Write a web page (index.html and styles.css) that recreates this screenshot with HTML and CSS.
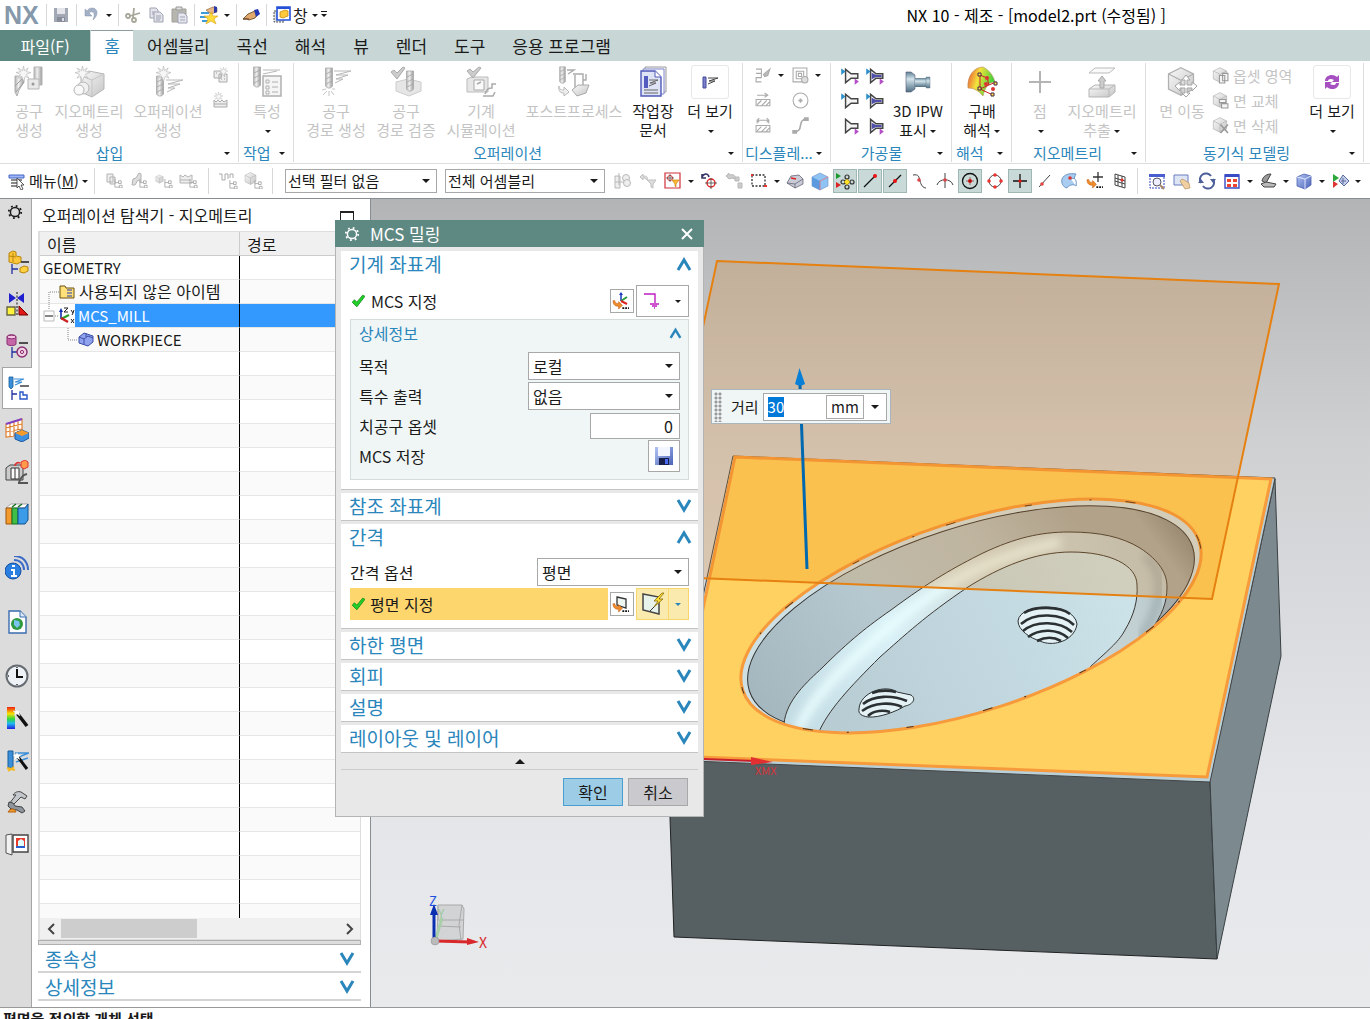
FILE: index.html
```html
<!DOCTYPE html>
<html lang="ko">
<head>
<meta charset="utf-8">
<title>NX 10 - 제조</title>
<link rel="stylesheet" href="styles.css">
</head>
<body>
<svg class="defs" width="0" height="0" aria-hidden="true">
  <defs>
    <linearGradient id="steel"><stop offset="0" stop-color="#b0b0b0"/><stop offset=".4" stop-color="#f0f0f0"/><stop offset="1" stop-color="#9c9c9c"/></linearGradient>
    <linearGradient id="boxg" x2="1" y2="1"><stop offset="0" stop-color="#fafafa"/><stop offset="1" stop-color="#c4c4c4"/></linearGradient>
    <linearGradient id="blueg" x2="1" y2="1"><stop offset="0" stop-color="#b4c6f4"/><stop offset="1" stop-color="#4a62b8"/></linearGradient>
    <linearGradient id="pipe" x2="0" y2="1"><stop offset="0" stop-color="#5d7f92"/><stop offset=".35" stop-color="#d3e4ec"/><stop offset="1" stop-color="#4e6f82"/></linearGradient>
    <linearGradient id="rainbow" x2="1" y2=".3"><stop offset="0" stop-color="#ee4a35"/><stop offset=".45" stop-color="#f3e23c"/><stop offset="1" stop-color="#3ad23a"/></linearGradient>
    <linearGradient id="spectrum" x2="0" y2="1"><stop offset="0" stop-color="#f02010"/><stop offset=".3" stop-color="#f8e000"/><stop offset=".55" stop-color="#30d840"/><stop offset=".75" stop-color="#20b8f0"/><stop offset="1" stop-color="#2020e0"/></linearGradient>
    <symbol id="spark" viewBox="0 0 16 16"><path d="M8 0l1 5 4-3-2 4 5 1-5 2 3 4-4-2-2 5-2-5-4 2 3-4-5-2 5-1-3-4 5 3z" fill="#f6f6f6" stroke="#bdbdbd" stroke-width=".8"/></symbol>
    <symbol id="mill" viewBox="0 0 8 22"><path d="M.5 1h7v18l-2 2h-3l-2-2z" fill="url(#steel)" stroke="#a8a8a8" stroke-width=".8"/><path d="M1 7l6-3M1 12l6-3M1 17l6-3" stroke="#a2a2a2" stroke-width=".8"/></symbol>
    <symbol id="path" viewBox="0 0 18 18"><path d="M0 4h17L2 8h12L2 12h7L1 16" fill="none" stroke="#b8b8b8"/></symbol>
    <symbol id="cube" viewBox="0 0 24 24"><path d="M12 1l10 5v12l-10 5-10-5V6z" fill="url(#boxg)" stroke="#b0b0b0"/><path d="M2 6l10 5 10-5M12 11v12" fill="none" stroke="#b0b0b0"/></symbol>
    <symbol id="gtree" viewBox="0 0 10 10"><path d="M1 0v9h5M1 4h4" fill="none" stroke="#a8a8a8"/><path d="M5 2h3v3H5zM6 7h3v3H6z" fill="#fff" stroke="#a8a8a8"/></symbol>
    <symbol id="tick" viewBox="0 0 12 12"><path d="M1 7l2-2 2 2 5-6 2 1-7 9z" fill="#20d028" stroke="#128a1a" stroke-width=".7"/></symbol>
    <symbol id="up" viewBox="0 0 16 14"><path d="M2 13L8 3l6 10" fill="none" stroke="#2a86bb" stroke-width="3"/></symbol>
    <symbol id="down" viewBox="0 0 16 14"><path d="M2 1l6 10 6-10" fill="none" stroke="#2a86bb" stroke-width="3"/></symbol>
    <symbol id="gear" viewBox="0 0 16 16"><circle cx="8" cy="8" r="4.600" fill="none" stroke="currentColor" stroke-width="1.500"/><circle cx="8" cy="8" r="6.200" fill="none" stroke="currentColor" stroke-width="1.800" stroke-dasharray="1.800 3.070"/></symbol>
    <symbol id="cone" viewBox="0 0 18 16"><path d="M5 2v12l5-4h6V6h-6z" fill="#f4f4f4" stroke="#444" stroke-width="1.3"/></symbol>
    <symbol id="conef" viewBox="0 0 18 16"><path d="M5 2v12l5-4h6V6h-6z" fill="#f4f4f4" stroke="#444" stroke-width="1.3"/><path d="M6 5l4 2h5v2h-5l-4 2z" fill="#5050a8"/></symbol>
    <symbol id="tri-b" viewBox="0 0 4 6"><path d="M0 0l4 3-4 3z" fill="#2c8fc9"/></symbol>
    <symbol id="tri-p" viewBox="0 0 4 6"><path d="M0 0l4 3-4 3z" fill="#b44fc8"/></symbol>
    <symbol id="hook" viewBox="0 0 18 16"><path d="M1 6c0 5 3 6 6 6v3l4-4-4-4v2c-3 0-4-1-4-3z" fill="#f08c28" stroke="#c05a10" stroke-width=".6"/><path d="M11 14h2M14 14h2M17 14h1" stroke="#111" stroke-width="2"/></symbol>
  </defs>
</svg>

<header class="titlebar">
  <div class="logo">NX</div>
  <i class="sep"></i>
  <button class="qa" aria-label="저장"><svg viewBox="0 0 22 22"><path d="M4 4h14v14H4z" fill="#a3a8b5"/><path d="M7 4h8v6H7z" fill="#e4e6ec"/><path d="M7 13h8v5H7z" fill="#888d9a"/><path d="M12 14h2v3h-2z" fill="#dde"/></svg></button>
  <i class="sep"></i>
  <button class="qa" aria-label="실행 취소"><svg viewBox="0 0 22 22"><path d="M5 5v7h7l-3-3c4-3 7 0 4 7 6-5 5-12-1-12-2 0-4 1-5 3z" fill="#a3b0c6" stroke="#8795ae" stroke-width=".5"/></svg></button>
  <button class="drop" aria-label="실행 취소 목록"><i class="caret"></i></button>
  <i class="sep"></i>
  <button class="qa" aria-label="잘라내기"><svg viewBox="0 0 22 22" fill="none" stroke="#a7a79a" stroke-width="1.8"><path d="M12 4l-1 10M18 9L8 12"/><circle cx="12" cy="16" r="2"/><circle cx="6" cy="12" r="2"/></svg></button>
  <button class="qa" aria-label="복사"><svg viewBox="0 0 22 22" fill="#e2e4ea" stroke="#9fa3b4"><path d="M5 4h6l2 2v8H5z"/><path d="M9 8h6l3 3v7H9z"/><path d="M11 12h5M11 14h5M11 16h4M7 8h2M7 10h2"/></svg></button>
  <button class="qa" aria-label="붙여넣기"><svg viewBox="0 0 22 22"><path d="M4 5h14v13H4z" fill="#b6b6ae" stroke="#a0a09a"/><path d="M8 3h6v3H8z" fill="#ddd" stroke="#999"/><path d="M10 9h6l3 3v7h-9z" fill="#e6e8ee" stroke="#9fa3b4"/><path d="M12 13h5M12 16h5" stroke="#9fa3b4"/></svg></button>
  <i class="sep"></i>
  <button class="qa" aria-label="명령 찾기"><svg viewBox="0 0 22 22"><path d="M3 9h8M2 13h7M4 17h8" stroke="#3f9ad8" stroke-width="2"/><path d="M8 6l7-3 4 1v4l-6 2z" fill="#e6b684" stroke="#8a5a30" stroke-width=".6"/><path d="M16 2l3 1v5l-3 1z" fill="#2c3aa8"/><path d="M13 8l2 4 5 0-4 3 2 5-5-3-5 3 2-5-4-3h5z" fill="#ffdb3c" stroke="#d8a010" stroke-width=".6"/></svg></button>
  <button class="drop" aria-label="명령 목록"><i class="caret"></i></button>
  <i class="sep"></i>
  <button class="qa" aria-label="터치 모드"><svg viewBox="0 0 22 22"><path d="M3 15l5-5 7-3 3 3-3 4-6 2-2-1z" fill="#e2a96c" stroke="#5c3a1c" stroke-width=".8"/><path d="M3 15h6" stroke="#5c3a1c"/><path d="M14 6l4-1 2 5-4 3z" fill="#2236b4"/></svg></button>
  <i class="sep"></i>
  <button class="qa-text"><svg viewBox="0 0 22 22" width="22" height="22"><path d="M4 7h10v11H4z" fill="#d8dee0" stroke="#555" stroke-dasharray="2 1"/><path d="M7 3h13v13H7z" fill="#fff" stroke="#2450d8" stroke-width="1.6"/><path d="M7 3h13v2H7z" fill="#2450d8"/><path d="M10 8l5-2 3 1v5l-5 2-3-1z" fill="#ffc93c" stroke="#c98a10" stroke-width=".8"/></svg>창<i class="caret"></i></button>
  <button class="drop" aria-label="도구모음 옵션"><i class="caret lined"></i></button>
  <h1>NX 10 - 제조 - [model2.prt (수정됨) ]</h1>
</header>

<nav class="tabs">
  <button class="file">파일(F)</button>
  <button class="on">홈</button>
  <button>어셈블리</button><button>곡선</button><button>해석</button><button>뷰</button><button>렌더</button><button>도구</button><button>응용 프로그램</button>
</nav>

<section class="ribbon">
  <div class="group g-insert">
    <div class="tools">
      <button class="big w52" disabled><svg viewBox="0 0 32 32"><path d="M21 1h8v18h-8z" fill="url(#steel)" stroke="#b5b5b5"/><path d="M15 13h11v10H15z" fill="#e9e9e9" stroke="#b5b5b5"/><circle cx="20" cy="18" r="1.500" fill="#999"/><path d="M2 10h9v6L6 24l-2 6-2-4z" fill="url(#steel)" stroke="#b0b0b0"/><path d="M2 20l8-8M3 26l8-10" stroke="#a0a0a0" fill="none"/><use href="#spark" x="3" y="0" width="15" height="15"/></svg><span>공구<br>생성</span></button>
      <button class="big w68" disabled><svg viewBox="0 0 32 32"><path d="M8 10l8-5 15 3v15l-12 8-11-5z" fill="url(#boxg)" stroke="#b5b5b5"/><path d="M8 10l11 4 12-6M19 14v17" fill="none" stroke="#c5c5c5"/><circle cx="10" cy="22" r="6" fill="#f0f0f0" stroke="#b5b5b5"/><circle cx="6" cy="24" r="5" fill="#fafafa" stroke="#b5b5b5"/><use href="#spark" x="2" y="0" width="15" height="15"/></svg><span>지오메트리<br>생성</span></button>
      <button class="big w90" disabled><svg viewBox="0 0 32 32"><use href="#mill" x="4" y="9" width="8" height="22"/><use href="#path" x="14" y="10" width="18" height="18"/><use href="#spark" x="4" y="0" width="15" height="15"/></svg><span>오퍼레이션<br>생성</span></button>
      <div class="stack">
        <button disabled aria-label="프로그램 생성"><svg viewBox="0 0 16 16"><path d="M1 4h7v7H1zM6 7h8v8H6z" fill="#eee" stroke="#aaa"/><path d="M8 9h1M11 9h1M8 12h1M11 12h1M3 6h1" stroke="#999"/><use href="#spark" x="6" y="0" width="9" height="9"/></svg></button>
        <button disabled aria-label="방법 생성"><svg viewBox="0 0 16 16"><path d="M1 15V8l2 2 2-2 2 2 2-2 2 2 3-2v7zM1 12h13" fill="#eee" stroke="#aaa"/><use href="#spark" x="1" y="0" width="9" height="9"/></svg></button>
      </div>
    </div>
    <div class="caption"><span>삽입</span><i class="caret"></i></div>
  </div>

  <div class="group g-action">
    <div class="tools">
      <button class="big w56" disabled><svg viewBox="0 0 32 32"><use href="#mill" x="2" y="0" width="8" height="22"/><path d="M12 4h17M12 8l14-3" stroke="#b8b8b8"/><path d="M12 10h18v20H12z" fill="#f5f5f5" stroke="#b0b0b0" stroke-width="1.5"/><path d="M15 14h3v3h-3zM15 20h3v3h-3zM15 25h3v3h-3zM21 16h6M21 21h6M21 26h6" fill="none" stroke="#b0b0b0"/></svg><span>특성<br><i class="caret"></i></span></button>
    </div>
    <div class="caption"><span>작업</span><i class="caret"></i></div>
  </div>

  <div class="group g-oper">
    <div class="tools">
      <button class="big w70" disabled><svg viewBox="0 0 32 32"><use href="#mill" x="5" y="1" width="8" height="22"/><use href="#path" x="14" y="1" width="18" height="18"/><path d="M2 24l4-1M15 23l-3 0M3 29l4-4M9 30v-5M14 29l-3-4" stroke="#c5c5c5"/></svg><span>공구<br>경로 생성</span></button>
      <button class="big w70" disabled><svg viewBox="0 0 32 32"><path d="M6 16l12-3 13 3v9l-12 5-13-5z" fill="#e6e6e6" stroke="#ccc"/><use href="#mill" x="16" y="4" width="8" height="22"/><path d="M1 6l3-2 3 3 6-6 2 1-8 11z" fill="#ccc" stroke="#aaa"/></svg><span>공구<br>경로 검증</span></button>
      <button class="big w80" disabled><svg viewBox="0 0 32 32"><path d="M2 13l5-2h16v15H2z" fill="#e6e6e6" stroke="#bbb"/><path d="M9 14h10v10H9z" fill="#fafafa" stroke="#aaa"/><path d="M12 18l4-2M20 28c2-5 3-6 7-6v-4h4M18 30h10l2-4" fill="none" stroke="#aaa" stroke-width="1.500"/><path d="M2 5l3-2 3 3 6-5 2 1-8 10z" fill="#ccc" stroke="#aaa"/></svg><span>기계<br>시뮬레이션</span></button>
      <button class="big w106" disabled><svg viewBox="0 0 32 32"><use href="#mill" x="1" y="0" width="7" height="18"/><path d="M9 4h7l-6 4M15 8h10v6h3V8M17 9v14M25 14v6" fill="none" stroke="#aaa" stroke-width="1.400"/><path d="M14 24l6-5h11l-3 8-9 3z" fill="url(#boxg)" stroke="#aaa"/><path d="M1 20c0 4 3 4 5 4v-3l5 5-5 4v-3c-3 0-6-1-5-7z" fill="#eee" stroke="#bbb"/></svg><span>포스트프로세스</span></button>
      <button class="big w52"><svg viewBox="0 0 32 32"><path d="M8 1h21v25H8z" fill="#f4f4fa" stroke="#9a9a9a"/><path d="M6 3h21v25H6z" fill="#fff" stroke="#7f86cc"/><path d="M4 5h14l6 6v19H4z" fill="#dfe3f6" stroke="#4f58b8" stroke-width="1.4"/><path d="M18 5v6h6" fill="#fff" stroke="#4f58b8"/><path d="M7 10h4v12H7z" fill="#555cc0"/><path d="M12 14h9l-8 3h6l-7 3M7 24h14M7 27h14" fill="none" stroke="#666"/></svg><span>작업장<br>문서</span></button>
      <button class="big w62 more"><svg viewBox="0 0 32 32"><path d="M9 11h3v11H9z" fill="#7a80cc" stroke="#444a98"/><path d="M14 12h10l-9 3h6l-7 3" fill="none" stroke="#444"/></svg><span>더 보기<br><i class="caret"></i></span></button>
    </div>
    <div class="caption"><span>오퍼레이션</span><i class="caret"></i></div>
  </div>

  <div class="group g-display">
    <div class="pairs">
      <button aria-label="공구 경로 표시"><svg viewBox="0 0 16 16" fill="none" stroke="#aaa"><path d="M1 2h5v4H1M1 6h5v4H1v4h5"/><path d="M8 7l6-5-2 6-3 1z" fill="#bbb"/></svg><i class="caret"></i></button>
      <button aria-label="레이어 표시"><svg viewBox="0 0 16 16" fill="none" stroke="#aaa"><path d="M1 1h13v13H1zM4 4h7v7H4zM6 6h3v3H6z"/><circle cx="12" cy="12" r="3" fill="#ddd"/></svg><i class="caret"></i></button>
      <button aria-label="이동 표시"><svg viewBox="0 0 16 16" fill="none" stroke="#aaa"><path d="M2 3h10M9 1l3 2-3 2M1 7h13v6H1zM2 12l4-4M6 13l5-5M10 13l4-4"/></svg></button>
      <button aria-label="원 표시"><svg viewBox="0 0 16 16" fill="none" stroke="#aaa"><circle cx="8" cy="8" r="7"/><path d="M6 8h4M8 6v4" stroke-width="1.6"/></svg></button>
      <button aria-label="간격 표시"><svg viewBox="0 0 16 16" fill="none" stroke="#aaa"><path d="M2 6V3h11v3M4 1L2 3l2 2M11 1l2 2-2 2M1 8h13v6H1zM2 13l4-4M6 14l5-5M10 14l4-4"/></svg></button>
      <button aria-label="곡선 표시"><svg viewBox="0 0 16 16" fill="none" stroke="#aaa" stroke-width="1.5"><path d="M2 14c10 0 2-12 12-12"/><path d="M1 13h3v2H1zM12 1h3v2h-3z" fill="#aaa"/></svg></button>
    </div>
    <div class="caption"><span>디스플레...</span><i class="caret"></i></div>
  </div>

  <div class="group g-work">
    <div class="tools">
      <div class="cones">
        <button aria-label="가공물 1"><svg viewBox="0 0 18 16"><use href="#cone"/><use href="#tri-b" x="1" y="1" width="4" height="6"/><use href="#tri-p" x="13" y="10" width="4" height="6"/></svg></button>
        <button aria-label="가공물 2"><svg viewBox="0 0 18 16"><use href="#conef"/><use href="#tri-b" x="1" y="1" width="4" height="6"/><use href="#tri-p" x="13" y="10" width="4" height="6"/></svg></button>
        <button aria-label="가공물 3"><svg viewBox="0 0 18 16"><use href="#cone"/><use href="#tri-b" x="1" y="1" width="4" height="6"/></svg></button>
        <button aria-label="가공물 4"><svg viewBox="0 0 18 16"><use href="#conef"/><use href="#tri-b" x="1" y="1" width="4" height="6"/></svg></button>
        <button aria-label="가공물 5"><svg viewBox="0 0 18 16"><use href="#cone"/><use href="#tri-p" x="13" y="10" width="4" height="6"/></svg></button>
        <button aria-label="가공물 6"><svg viewBox="0 0 18 16"><use href="#conef"/><use href="#tri-p" x="13" y="10" width="4" height="6"/></svg></button>
      </div>
      <button class="big w56"><svg viewBox="0 0 32 32"><path d="M4 6h5l4 3v14l-4 3H4z" fill="url(#pipe)" stroke="#557" stroke-width=".6"/><path d="M13 12h15v9H13z" fill="url(#pipe)"/><path d="M24 11h4v11h-4z" fill="url(#pipe)" stroke="#68808c" stroke-width=".5"/></svg><span>3D IPW<br>표시<i class="caret"></i></span></button>
    </div>
    <div class="caption"><span>가공물</span><i class="caret"></i></div>
  </div>

  <div class="group g-analysis">
    <div class="tools">
      <button class="big w60"><svg viewBox="0 0 32 32"><path d="M2 22C1 10 8 1 17 1c6 3 10 8 12 15-7 0-10 6-12 14-4-5-9-8-15-8z" fill="url(#rainbow)" stroke="#b98a5a" stroke-width=".6"/><path d="M14 9v14l13 6M14 9l7 3 2 7 7-3M14 23l9-4" fill="none" stroke="#c22"/><path d="M12 7h3v3h-3zM12 21h3v3h-3zM28 16h3v3h-3zM25 27h3v3h-3z" fill="#ffe84a" stroke="#424"/><circle cx="21" cy="12" r="2" fill="#d33"/><circle cx="20" cy="18" r="2" fill="#d33"/><circle cx="27" cy="23" r="2" fill="#d33"/></svg><span>구배<br>해석<i class="caret"></i></span></button>
    </div>
    <div class="caption"><span>해석</span><i class="caret"></i></div>
  </div>

  <div class="group g-geo">
    <div class="tools">
      <button class="big w56" disabled><svg viewBox="0 0 32 32"><path d="M5 16h22M16 5v22" stroke="#b4b4b4" stroke-width="2"/></svg><span>점<br><i class="caret"></i></span></button>
      <button class="big w68" disabled><svg viewBox="0 0 32 32"><path d="M3 7l6-5h20l-6 5z" fill="#fafafa" stroke="#bbb"/><path d="M3 23l6-4h20v7l-6 5H3z" fill="url(#boxg)" stroke="#b5b5b5"/><path d="M3 23h20l6-4M23 23v8" fill="none" stroke="#bbb"/><path d="M16 10l4 5h-2v7h-4v-7h-2z" fill="#ccc" stroke="#aaa"/></svg><span>지오메트리<br>추출<i class="caret"></i></span></button>
    </div>
    <div class="caption"><span>지오메트리</span><i class="caret"></i></div>
  </div>

  <div class="group g-sync">
    <div class="tools">
      <button class="big w60" disabled><svg viewBox="0 0 32 32"><use href="#cube" x="0" y="0" width="30" height="31"/><path d="M20 9l4 5h-3v5h5v-3l5 4-5 5v-3h-5v5h3l-4 4-4-4h3v-5h-5v3l-5-5 5-4v3h5v-5h-3z" fill="#fff" stroke="#a4a4a4"/></svg><span>면 이동</span></button>
      <div class="rows">
        <button disabled><svg viewBox="0 0 16 16"><use href="#cube" width="15" height="15"/><path d="M7 8h5v7H7zM10 6h5v7h-5z" fill="#f4f4f4" stroke="#999"/></svg>옵셋 영역</button>
        <button disabled><svg viewBox="0 0 16 16"><use href="#cube" width="15" height="15"/><path d="M7 7h6v3H7zM9 11h6v4H9z" fill="#f4f4f4" stroke="#999"/></svg>면 교체</button>
        <button disabled><svg viewBox="0 0 16 16"><use href="#cube" width="15" height="15"/><path d="M8 7l7 8M15 7l-7 8" stroke="#999" stroke-width="1.5"/></svg>면 삭제</button>
      </div>
      <button class="big w62 more"><svg viewBox="0 0 32 32"><path d="M9 15c0-6 8-8 12-4l2-2v7h-7l2-2c-3-2-6-1-6 1zM23 17c0 6-8 8-12 4l-2 2v-7h7l-2 2c3 2 6 1 6-1z" fill="#a64fc0"/></svg><span>더 보기<br><i class="caret"></i></span></button>
    </div>
    <div class="caption"><span>동기식 모델링</span><i class="caret"></i></div>
  </div>
</section>

<section class="selbar">
  <button class="menu"><svg viewBox="0 0 18 18" width="18" height="18"><path d="M1 3h15v3H1z" fill="#9fb6f0" stroke="#4466cc"/><path d="M3 8h11M3 11h11M3 14h11" stroke="#666" stroke-width="1.4"/><path d="M9 6v10l2-2 2 4 2-1-2-4h3z" fill="#fff" stroke="#333" stroke-width=".8"/></svg><span>메뉴(<u>M</u>)</span><i class="caret"></i></button>
  <i class="sep"></i>
  <div class="faded">
    <button aria-label="프로그램 순서 뷰"><svg viewBox="0 0 20 20"><path d="M3 3h6v8H3zM6 6h5v7H6z" fill="#eee" stroke="#b4b4b4"/><use href="#gtree" x="10" y="8" width="9" height="9"/></svg></button>
    <button aria-label="기계 공구 뷰"><svg viewBox="0 0 20 20"><path d="M3 14l1-6 3-1 3-5 2 1v8l-3-2-3 5z" fill="#ddd" stroke="#b4b4b4"/><use href="#gtree" x="10" y="8" width="9" height="9"/></svg></button>
    <button aria-label="지오메트리 뷰"><svg viewBox="0 0 20 20"><use href="#cube" x="1" y="3" width="9" height="10"/><use href="#gtree" x="10" y="8" width="9" height="9"/></svg></button>
    <button aria-label="가공 방법 뷰"><svg viewBox="0 0 20 20"><path d="M1 12V4l3 2 2-2 3 2 4-2v8zM1 9h11" fill="#eee" stroke="#b4b4b4"/><use href="#gtree" x="10" y="8" width="9" height="9"/></svg></button>
  </div>
  <i class="sep"></i>
  <div class="faded">
    <button aria-label="전체 축소"><svg viewBox="0 0 20 20"><path d="M1 3h3v6h3V3h3v5M12 7V3h3v4" fill="none" stroke="#aaa"/><use href="#gtree" x="11" y="9" width="9" height="9"/></svg></button>
    <button aria-label="전체 확장"><svg viewBox="0 0 20 20"><use href="#cube" x="1" y="1" width="13" height="13"/><use href="#gtree" x="11" y="9" width="9" height="9"/></svg></button>
  </div>
  <i class="sep"></i>
  <span class="select filter"><select aria-label="선택 필터"><option>선택 필터 없음</option></select></span>
  <span class="select scope"><select aria-label="선택 범위"><option>전체 어셈블리</option></select></span>
  <div class="icons">
    <button aria-label="동일 유형"><svg viewBox="0 0 20 20" fill="#eee" stroke="#b8b8b8"><path d="M2 5h5v12H2zM2 11h9M6 2v12"/><circle cx="13" cy="7" r="3.5"/><circle cx="14" cy="12" r="3.5"/></svg></button>
    <button aria-label="필터 재설정"><svg viewBox="0 0 20 20" fill="#ddd" stroke="#c0c0c0"><path d="M2 6l3-3v2c4 0 5 1 4 4-1-1-2-2-4-2v2zM9 9h9l-3 4v4l-2-1v-3z"/></svg></button>
    <button aria-label="상세 필터"><svg viewBox="0 0 20 20"><path d="M2 2h15v15H2z" fill="#fff" stroke="#d03038" stroke-width="1.2"/><circle cx="7" cy="7" r="2.5" fill="none" stroke="#c33"/><path d="M3 7h8M7 3v8" stroke="#444" stroke-width=".7"/><path d="M9 9h7l-3 4v3l-1-1v-2z" fill="#ffbb33" stroke="#c88210" stroke-width=".7"/></svg></button>
    <button class="drop" aria-label="필터 목록"><i class="caret"></i></button>
    <button aria-label="선택 초기화"><svg viewBox="0 0 20 20" fill="none"><path d="M3 3v4h4M3 6c2-4 6-4 7 0" stroke="#336" stroke-width="1.6"/><circle cx="12" cy="12" r="4" stroke="#d22" stroke-width="1.4"/><path d="M6 12h12M12 7v11" stroke="#444" stroke-width=".8"/></svg></button>
    <button aria-label="상위 선택"><svg viewBox="0 0 20 20" fill="#ccc" stroke="#b8b8b8"><path d="M2 5l3-3v2c4-1 7 0 6 4l-3-1-3 1z"/><path d="M11 6h4v4h-4zM14 12h4v5h-4z"/></svg></button>
    <button aria-label="사각형 선택"><svg viewBox="0 0 20 20"><path d="M3 4h13v11H3z" fill="none" stroke="#333" stroke-dasharray="2 1.5" stroke-width="1.3"/><path d="M2 3h2v2H2zM15 14h3v2h-3z" fill="#e33"/></svg></button>
    <button class="drop" aria-label="선택 방식 목록"><i class="caret"></i></button>
    <button aria-label="면 선택"><svg viewBox="0 0 20 20"><path d="M2 12l4-7 8-1 4 4v5l-8 4z" fill="#c9ccd6" stroke="#667" stroke-width=".8"/><path d="M2 12l8 1 8-5M10 13v4" fill="none" stroke="#667" stroke-width=".8"/><path d="M6 7l5 1" stroke="#d22" stroke-width="1.5"/></svg></button>
    <button aria-label="솔리드 선택"><svg viewBox="0 0 20 20"><path d="M10 2l8 4v9l-8 4-8-4V6z" fill="#8ec3f4" stroke="#7898c8" stroke-width=".7"/><path d="M2 6l8 4v9l-8-4z" fill="#5c9ae0"/><path d="M10 10v9M10 10l8-4" stroke="#e66" stroke-width=".7"/></svg></button>
    <button class="on" aria-label="스냅 사용"><svg viewBox="0 0 20 20"><path d="M1 2l5 3-5 3z" fill="#1a9a2a"/><path d="M1 11l5 3-5 3z" fill="#d22"/><g fill="none" stroke="#333" stroke-width="1.200"><circle cx="12" cy="6" r="2"/><circle cx="12" cy="16" r="2"/><circle cx="17" cy="11" r="2"/><circle cx="8" cy="11" r="2"/></g><path d="M12 8l3 3-3 3-3-3z" fill="#ffe12a" stroke="#a80" stroke-width=".7"/></svg></button>
    <button class="on" aria-label="끝점"><svg viewBox="0 0 20 20"><path d="M4 16L15 5" stroke="#111" stroke-width="1.3"/><circle cx="15" cy="5" r="2" fill="#e11"/></svg></button>
    <button class="on" aria-label="중간점"><svg viewBox="0 0 20 20"><path d="M4 16L16 4" stroke="#111" stroke-width="1.3"/><circle cx="10" cy="10" r="2" fill="#e11"/></svg></button>
    <button aria-label="제어점"><svg viewBox="0 0 20 20"><path d="M3 4c6-1 6 2 7 6s3 7 6 7" fill="none" stroke="#444"/><circle cx="9" cy="9" r="1.8" fill="#d44"/></svg></button>
    <button aria-label="교차점"><svg viewBox="0 0 20 20"><path d="M2 14c2-7 14-7 16 0M10 2v15" fill="none" stroke="#444"/><circle cx="10" cy="9" r="1.8" fill="#d44"/></svg></button>
    <button class="on" aria-label="원호 중심"><svg viewBox="0 0 20 20"><circle cx="10" cy="10" r="7.5" fill="none" stroke="#111" stroke-width="1.3"/><circle cx="10" cy="10" r="2" fill="#e11"/><path d="M6 10h8M10 6v8" stroke="#711" stroke-width=".6"/></svg></button>
    <button aria-label="사분점"><svg viewBox="0 0 20 20"><circle cx="10" cy="10" r="6" fill="none" stroke="#444"/><g fill="#e33"><circle cx="10" cy="4" r="1.8"/><circle cx="10" cy="16" r="1.8"/><circle cx="4" cy="10" r="1.8"/><circle cx="16" cy="10" r="1.8"/></g></svg></button>
    <button class="on" aria-label="기존 점"><svg viewBox="0 0 20 20"><path d="M3 10h14M10 3v14" stroke="#111" stroke-width="1.3"/><circle cx="10" cy="10" r="1.6" fill="#e11"/></svg></button>
    <button aria-label="곡선 위의 점"><svg viewBox="0 0 20 20"><path d="M4 16L15 4" stroke="#444"/><circle cx="7" cy="13" r="1.8" fill="#d44"/></svg></button>
    <button aria-label="면 위의 점"><svg viewBox="0 0 20 20"><path d="M2 8c2-5 8-6 14-5-3 4-1 8 0 12-3-3-8 0-9 2-4-1-6-5-5-9z" fill="#a9cdf0" stroke="#6a94c4"/><path d="M11 8c4-2 6 1 5 7" fill="#fff" stroke="#6a94c4"/><circle cx="10" cy="7" r="1.8" fill="#d33"/></svg></button>
    <button aria-label="점 생성자"><svg viewBox="0 0 20 20"><path d="M8 6h10M13 1v10" stroke="#333" stroke-width="1.3"/><use href="#hook" x="1" y="3" width="17" height="15"/></svg></button>
    <button aria-label="모눈 점"><svg viewBox="0 0 20 20"><path d="M5 3l10 3v11L5 14zM5 7l10 3M5 10l10 3M8 4v11M12 5v11" fill="none" stroke="#444"/><circle cx="12" cy="9" r="1.6" fill="#d33"/></svg></button>
    <i class="sep"></i>
    <button aria-label="맞춤"><svg viewBox="0 0 20 20"><path d="M3 5h14v12H3z" fill="#fff" stroke="#3344bb" stroke-dasharray="2 1"/><path d="M2 3h16v3H2z" fill="#4a5ed0"/><circle cx="10" cy="11" r="4" fill="#eef" stroke="#556"/><path d="M13 14l4 4" stroke="#a86" stroke-width="2"/></svg></button>
    <button aria-label="이동"><svg viewBox="0 0 20 20"><path d="M2 4h14v10H2z" fill="#dde4f4" stroke="#6a7cc0"/><path d="M8 10l2-2 4 2 3 2 1 5-5 1z" fill="#f0cfa0" stroke="#a98050" stroke-width=".6"/></svg></button>
    <button aria-label="회전"><svg viewBox="0 0 20 20" fill="none" stroke="#4c5f98" stroke-width="2"><path d="M4 12a6 6 0 0 1 10-7M16 8a6 6 0 0 1-10 7"/><path d="M1 12h6l-3-4zM19 8h-6l3 4z" fill="#4c5f98" stroke="none"/></svg></button>
    <button aria-label="뷰 배치"><svg viewBox="0 0 20 20"><path d="M3 4h14v13H3z" fill="#fff" stroke="#3a4cc4" stroke-width="1.4"/><path d="M3 3h14v3H3z" fill="#3a4cc4"/><path d="M5 8h4v3H5zM11 8h4v3h-4zM5 13h4v3H5zM11 13h4v3h-4z" fill="#e43"/></svg></button>
    <button class="drop" aria-label="뷰 배치 목록"><i class="caret"></i></button>
    <button aria-label="뷰 방향"><svg viewBox="0 0 20 20"><path d="M4 10c1-5 5-7 9-7l-5 9z" fill="#999" stroke="#444"/><path d="M3 13l5-2 10 2-2 3H6z" fill="#bbb" stroke="#444"/></svg></button>
    <button class="drop" aria-label="뷰 방향 목록"><i class="caret"></i></button>
    <button aria-label="음영처리"><svg viewBox="0 0 20 20"><path d="M3 6l7-3 7 2v9l-6 4-8-3z" fill="url(#blueg)" stroke="#4a5fae" stroke-width=".8"/><path d="M3 6l8 2 6-3M11 8v10" fill="none" stroke="#dfe6ff"/></svg></button>
    <button class="drop" aria-label="음영처리 목록"><i class="caret"></i></button>
    <button aria-label="표시 및 숨기기"><svg viewBox="0 0 20 20"><path d="M3 3l6 4-6 4z" fill="#2aa83a"/><path d="M3 10l5 3-5 4z" fill="#d33"/><path d="M13 4l6 6-5 5-5-5z" fill="#c6cfe8" stroke="#56689c"/><path d="M13 7v6M16 10h-5" stroke="#56689c"/></svg></button>
    <button class="drop" aria-label="표시 목록"><i class="caret"></i></button>
  </div>
</section>

<main class="work">
  <nav class="rail">
    <button class="gearbtn" aria-label="설정"><svg viewBox="0 0 16 16" width="16" height="16"><use href="#gear"/></svg></button>
    <button aria-label="어셈블리 탐색기"><svg viewBox="0 0 24 24"><path d="M4 3l4-2 3 1v4l5 1v5l-4 2-8-2z" fill="#fcc63a" stroke="#b8860b"/><path d="M4 6l7 1M8 3v9" stroke="#b8860b" fill="none"/><path d="M7 14v10M7 19h6" stroke="#2030a0" stroke-width="1.3"/><path d="M16 12h8" stroke="#111" stroke-width="1.4"/><path d="M15 18l4-2 4 1v4l-4 2-4-1z" fill="#ffd040" stroke="#b8860b"/></svg></button>
    <button aria-label="구속조건 탐색기"><svg viewBox="0 0 24 24"><path d="M4 1v10l7-5zM19 1v10l-7-5z" fill="#2020d0"/><path d="M12 0v24" stroke="#111" stroke-dasharray="2 1.5"/><path d="M2 15h8v8H2z" fill="#fff23a" stroke="#664" stroke-width="1.4"/><path d="M14 14l9 9h-9z" fill="#e01818" stroke="#700"/></svg></button>
    <button aria-label="파트 탐색기"><svg viewBox="0 0 24 24"><path d="M2 3c0-3 9-3 9 0v7c0 2-9 2-9 0z" fill="#c566a8" stroke="#8a2f70"/><ellipse cx="6.500" cy="3" rx="4.500" ry="1.800" fill="#f3c6e4" stroke="#8a2f70"/><path d="M7 13v11M7 18h5" stroke="#2030a0" stroke-width="1.3"/><path d="M14 9h9" stroke="#111" stroke-width="1.4"/><circle cx="17" cy="18" r="5" fill="#f2d0e4" stroke="#8a2f70" stroke-width="1.4"/><circle cx="17" cy="18" r="1.600" fill="none" stroke="#8a2f70"/></svg></button>
    <button class="on" aria-label="오퍼레이션 탐색기"><svg viewBox="0 0 24 24"><path d="M3 1h4v10l-2 2-2-2z" fill="#3b8fd8" stroke="#1b5f9c" stroke-width=".8"/><path d="M8 3h10L9 6h7L9 9" fill="none" stroke="#3b8fd8" stroke-width="1.200"/><path d="M14 10h9" stroke="#222" stroke-width="1.300"/><path d="M6 14v10M6 18h5" stroke="#2030a0" stroke-width="1.3"/><path d="M14 16h3v3h4v4h-7z" fill="#fff" stroke="#2a55c8" stroke-width="1.4"/></svg></button>
    <button aria-label="가공 기능 탐색기"><svg viewBox="0 0 24 24"><path d="M1 6l16-5v16L1 19zM1 10l16-4M1 14l16-3M5 5v13M9 4v14M13 3v14" fill="#fff" stroke="#e08030" stroke-width="1.2"/><path d="M1 6l16-5" stroke="#8040c0" stroke-width="2"/><path d="M10 15l7-3 7 3v5l-7 4-7-3z" fill="#3f8fe0" stroke="#1c5aa0"/><path d="M10 15l7-3 7 3-7 3z" fill="#f69a2c"/></svg></button>
    <button aria-label="기계 공구 탐색기"><svg viewBox="0 0 24 24"><path d="M1 8l4-3h13v15H1z" fill="#ccc" stroke="#444"/><path d="M6 8h8v11H6z" fill="#fafafa" stroke="#333"/><path d="M10 8v11" stroke="#333"/><path d="M10 6c0-3 3-4 5-3" fill="none" stroke="#d33" stroke-width="1.6"/><path d="M16 2l4-2 3 2v5l-4 2-3-2z" fill="#ff9a4a" stroke="#d33"/><path d="M14 22c3-6 4-7 8-8M13 23h10" fill="none" stroke="#555" stroke-width="2"/></svg></button>
    <button aria-label="재사용 라이브러리"><svg viewBox="0 0 24 24"><path d="M1 6l5-4h17l-3 4z" fill="#fff" stroke="#777" stroke-width=".6"/><path d="M1 6h6v16H1z" fill="#f39a2e" stroke="#9c5708"/><path d="M7 6h6v16H7z" fill="#3fbf46" stroke="#127020"/><path d="M13 6h7l3-4v16l-3 4h-7z" fill="#3b9be8" stroke="#13508c"/><path d="M7 5l4-3M13 5l4-3" stroke="#127020" stroke-width="1.500"/></svg></button>
    <button class="gap" aria-label="HD3D 도구"><svg viewBox="0 0 24 24"><circle cx="8" cy="15" r="8" fill="#2a7fe0" stroke="#1850a0"/><path d="M7 10h3M6 14h3v6M6 20h6" stroke="#fff" stroke-width="2" fill="none"/><path d="M9 4c6 0 10 4 10 10M9 0c9 0 14 6 14 14" fill="none" stroke="#3c6cc8" stroke-width="2"/></svg></button>
    <button class="gap" aria-label="웹 브라우저"><svg viewBox="0 0 24 24"><path d="M4 1h11l6 6v16H4z" fill="#fff" stroke="#3a6cb0" stroke-width="1.400"/><path d="M15 1v6h6" fill="#dbe8f8" stroke="#3a6cb0"/><circle cx="12" cy="14" r="6" fill="#2f9a40"/><path d="M9 10l5 1 1 4-3 3-3-3z" fill="#7cc4f0"/></svg></button>
    <button class="gap" aria-label="히스토리"><svg viewBox="0 0 24 24"><circle cx="12" cy="12" r="10.500" fill="#eef2f6" stroke="#666b72" stroke-width="2"/><path d="M12 5v8h6" fill="none" stroke="#111" stroke-width="2"/><path d="M12 3v1M12 20v1M3 12h1" stroke="#333" stroke-width="1.500"/></svg></button>
    <button aria-label="시스템 재료"><svg viewBox="0 0 24 24"><path d="M2 1h8v22H2z" fill="url(#spectrum)"/><path d="M12 7l10 13" stroke="#111" stroke-width="3.500"/><path d="M12 2l1 3 3 0-2 2 1 3-3-2-3 2 1-3-2-2 3 0z" fill="#fff" stroke="#ccc" stroke-width=".5"/></svg></button>
    <button aria-label="프로세스 스튜디오"><svg viewBox="0 0 24 24"><path d="M3 3h5v17H3z" fill="#3b8fd8" stroke="#1b5f9c"/><path d="M10 5h14L11 10M11 14l12-4" fill="none" stroke="#3b8fd8" stroke-width="1.500"/><path d="M2 20l8 2M3 23l6-4" stroke="#f5b820" stroke-width="2"/><path d="M13 9l9 12" stroke="#111" stroke-width="3"/><path d="M12 4l1 3 3 0-2 2 1 3-3-2-3 2 1-3-2-2 3 0z" fill="#fff"/></svg></button>
    <button aria-label="제조 마법사"><svg viewBox="0 0 24 24"><path d="M8 5c2-3 5-4 8-3l6 4-2 3-4-2-9 9-3-2 7-9z" fill="#c4c8cc" stroke="#444"/><path d="M4 12l4 1 2 3 7 1 3 4-3 2-5-3-6-1-3-3z" fill="#8f959c" stroke="#444"/><path d="M3 22c2-4 7-4 8 0z" fill="#f59a2c" stroke="#b4600a"/></svg></button>
    <button aria-label="역할"><svg viewBox="0 0 24 24"><path d="M8 3h15v17H8z" fill="#fff" stroke="#444" stroke-width="1.400"/><path d="M1 3l6-1v21l-6-2z" fill="#f2f2f2" stroke="#555"/><path d="M11 6h9v9h-9z" fill="#e83a2a"/><path d="M13 15V9l3-2 3 2v6z" fill="#dff"/><path d="M11 15h9" stroke="#2a60d0" stroke-width="2"/></svg></button>
  </nav>

  <aside class="navigator">
    <div class="navtitle"><h2>오퍼레이션 탐색기 - 지오메트리</h2><button class="pin" aria-label="최대화"></button></div>
    <div class="treebox">
      <div class="treeclip">
        <table>
          <thead><tr><th>이름</th><th>경로</th></tr></thead>
          <tbody>
            <tr><td><div class="node"><span>GEOMETRY</span></div></td><td></td></tr>
            <tr><td><div class="node folder"><svg width="36" height="23" viewBox="0 0 36 23"><path d="M9 23V12h10" fill="none" stroke="#888" stroke-dasharray="1 1"/><path d="M20 6h5l1 2h8v10H20z" fill="#ffe07a" stroke="#6b5310"/><path d="M27 10h5M27 13h5M27 16h5" stroke="#2238b0"/></svg><span>사용되지 않은 아이템</span></div></td><td></td></tr>
            <tr class="picked"><td><div class="node"><svg width="35" height="23" viewBox="0 0 35 23"><path d="M9 0v6M15 12h4" stroke="#888" stroke-dasharray="1 1"/><path d="M4 7h10v10H4z" fill="#fff" stroke="#bbb"/><path d="M5 12h8" stroke="#111"/><path d="M21 15V6" stroke="#1030b0" stroke-width="1.600"/><path d="M19 8l2-4 2 4z" fill="#1030b0"/><path d="M21 15l8-4" stroke="#28a028" stroke-width="2"/><path d="M21 14l7 4" stroke="#c22" stroke-width="2.500"/><path d="M24 4h4l-4 4h4M31 6l2 3 1-3M33 9l-1 2M31 15l3 4M34 15l-3 4" fill="none" stroke="#222"/></svg><span>MCS_MILL</span></div></td><td></td></tr>
            <tr><td><div class="node"><svg width="54" height="23" viewBox="0 0 54 23"><path d="M28 0v12h10" fill="none" stroke="#888" stroke-dasharray="1 1"/><path d="M39 9l5-4 9 3v6l-5 4-9-3z" fill="#8ea2ee" stroke="#3c4fa8"/><path d="M39 9l5 2v5M44 11l4-3 5 2M46 5v4" fill="none" stroke="#3c4fa8"/></svg><span>WORKPIECE</span></div></td><td></td></tr>
            <tr><td></td><td></td></tr><tr><td></td><td></td></tr><tr><td></td><td></td></tr><tr><td></td><td></td></tr>
            <tr><td></td><td></td></tr><tr><td></td><td></td></tr><tr><td></td><td></td></tr><tr><td></td><td></td></tr>
            <tr><td></td><td></td></tr><tr><td></td><td></td></tr><tr><td></td><td></td></tr><tr><td></td><td></td></tr>
            <tr><td></td><td></td></tr><tr><td></td><td></td></tr><tr><td></td><td></td></tr><tr><td></td><td></td></tr>
            <tr><td></td><td></td></tr><tr><td></td><td></td></tr><tr><td></td><td></td></tr><tr><td></td><td></td></tr>
            <tr><td></td><td></td></tr><tr><td></td><td></td></tr><tr><td></td><td></td></tr><tr><td></td><td></td></tr>
          </tbody>
        </table>
      </div>
      <div class="hscroll">
        <button aria-label="왼쪽으로"><svg viewBox="0 0 10 12" width="10" height="12"><path d="M8 1L3 6l5 5" fill="none" stroke="#444" stroke-width="2"/></svg></button>
        <div class="track"><div class="thumb"></div></div>
        <button aria-label="오른쪽으로"><svg viewBox="0 0 10 12" width="10" height="12"><path d="M2 1l5 5-5 5" fill="none" stroke="#444" stroke-width="2"/></svg></button>
      </div>
    </div>
    <div class="splitter"></div>
    <button class="fold">종속성<svg width="16" height="14"><use href="#down"/></svg></button>
    <button class="fold">상세정보<svg width="16" height="14"><use href="#down"/></svg></button>
  </aside>

  <section class="view">
    <svg class="scene" viewBox="371 199 999 808" preserveAspectRatio="xMinYMin slice">
      <defs>
        <linearGradient id="wall" gradientUnits="userSpaceOnUse" x1="748" y1="690" x2="1198" y2="540"><stop offset="0" stop-color="#a3b6bd"/><stop offset=".35" stop-color="#b7c9d0"/><stop offset=".6" stop-color="#b6c2c4"/><stop offset=".8" stop-color="#a4aaa8"/><stop offset=".9" stop-color="#a6aba8"/><stop offset="1" stop-color="#777c7c"/></linearGradient>
        <linearGradient id="floor" gradientUnits="userSpaceOnUse" x1="840" y1="720" x2="1120" y2="590"><stop offset="0" stop-color="#b8ccd4"/><stop offset="1" stop-color="#cbe2e9"/></linearGradient>
        <linearGradient id="fillet" gradientUnits="userSpaceOnUse" x1="800" y1="720" x2="1160" y2="570"><stop offset="0" stop-color="#c4dce4"/><stop offset=".3" stop-color="#d8f0f6"/><stop offset=".6" stop-color="#cfdcdc"/><stop offset="1" stop-color="#bccbce"/></linearGradient>
        <clipPath id="pocket"><ellipse cx="971" cy="616" rx="239" ry="94" transform="rotate(-18 971 616)"/></clipPath>
        <clipPath id="roll"><path id="rollpath" d="M784 724C786 700 808 681 822 668C850 640 868 626 891 610C930 581 955 567 983 553C1015 538 1040 532 1069 532C1100 532 1122 537 1140 548C1160 561 1167 574 1167 587C1167 603 1162 615 1150 632L1090 667C1112 647 1119 641 1125 630C1134 615 1138 600 1137 585C1137 565 1110 552 1071 552C1035 552 1000 567 968 587C925 616 905 635 880 657C850 687 828 710 818 734Z"/></clipPath>
        <filter id="soft"><feGaussianBlur stdDeviation="5"/></filter>
      </defs>
      <path d="M668 758L1210 780L1217 959L674 937Z" fill="#565f62" stroke="#222"/>
      <path d="M1210 780L1275 479L1281 656L1217 959Z" fill="#7c898f" stroke="#3a4144"/>
      <path d="M733 456L1275 478L1210 782L668 760Z" fill="#b9d0d8" stroke="#444"/>
      <path d="M735 457L1271 479L1207 777L672 756Z" fill="#ffd160" stroke="#f79a3c" stroke-width="3"/>
      <g clip-path="url(#pocket)">
        <path d="M730 480h480v270H730z" fill="#cfe0e4"/>
        <ellipse cx="971" cy="619" rx="233" ry="92" transform="rotate(-18 971 619)" fill="url(#wall)" stroke="#333"/>
        <path d="M784 740C786 700 808 681 822 668C850 640 868 626 891 610C930 581 955 567 983 553C1015 538 1040 532 1069 532C1100 532 1122 537 1140 548C1160 561 1167 574 1167 587C1167 603 1162 615 1150 632L1090 690L900 750Z" fill="url(#floor)"/>
        <use href="#rollpath" fill="url(#fillet)"/>
        <g clip-path="url(#roll)"><path d="M798 730C812 696 850 660 895 622C930 594 975 560 1060 542" fill="none" stroke="#eaffff" stroke-width="9" filter="url(#soft)"/><path d="M1145 555C1164 570 1166 600 1140 640" fill="none" stroke="#8e9da1" stroke-width="5" filter="url(#soft)"/></g>
        <path d="M784 724C786 700 808 681 822 668C850 640 868 626 891 610C930 581 955 567 983 553C1015 538 1040 532 1069 532C1100 532 1122 537 1140 548C1160 561 1167 574 1167 587C1167 603 1162 615 1150 632M818 734C828 710 850 687 880 657C905 635 925 616 968 587C1000 567 1035 552 1071 552C1110 552 1137 565 1137 585C1138 600 1134 615 1125 630C1119 641 1112 647 1090 667" fill="none" stroke="#3b3834"/>
        <g stroke="#2b3032" fill="none"><path d="M1018 621C1020 602 1074 602 1077 624C1076 633 1068 640 1060 642C1054 644 1046 644 1040 641C1030 638 1018 630 1018 621Z" fill="#e4f2f6"/><path d="M1024 613C1034 606 1060 606 1070 614M1021 624C1034 612 1062 613 1074 625M1023 631C1036 620 1060 621 1072 632M1028 637C1040 628 1058 629 1068 638M1037 641C1045 637 1054 637 1061 641" stroke-width="2.600"/></g>
        <g stroke="#2b3032" fill="none"><path d="M859 709C860 692 886 684 897 692L911 695C917 699 912 705 905 706C897 711 880 718 868 717C862 716 858 714 859 709Z" fill="#e4f2f6"/><path d="M872 693C880 690 888 690 896 692M863 704C874 695 892 695 907 701M862 711C874 702 892 702 902 707M868 716C874 710 884 710 890 712" stroke-width="2.600"/></g>
      </g>
      <ellipse cx="971" cy="616" rx="240" ry="95" transform="rotate(-18 971 616)" fill="none" stroke="#f79a3c" stroke-width="3"/>
      <ellipse cx="971" cy="616" rx="240" ry="94" transform="rotate(-18 971 616)" fill="none" stroke="#4a3520" stroke-dasharray="7 58 2 34 10 71"/>
      <path d="M717 261L1279 284L1212 599L650 576Z" fill="#e68010" fill-opacity=".2" stroke="#e68010" stroke-width="2"/>
      <path d="M800 385L807 569" stroke="#0068ae" stroke-width="3"/>
      <path d="M799.500 368L805 384Q800 387 795 384Z" fill="#0880d8"/>
      <path d="M704 759L755 761" stroke="#c8202a" stroke-width="2"/>
      <path d="M751 757L773 762L751 765Z" fill="#e23030"/>
      <text x="755" y="775" fill="#d8343a" font-size="11">XMX</text>
      <g>
        <path d="M438 905l24 0 2 4-1 30-26 2z" fill="#c9cacc" fill-opacity=".7" stroke="#aaa"/><path d="M437 920l27 0M437 926l24 1M462 905l-3 20 2 15M438 905l0 14" fill="none" stroke="#aaa"/>
        <path d="M436 938l6-20" stroke="#a8cfa8" stroke-width="3"/><text x="438" y="918" fill="#9cc89c" font-size="12">Y</text>
        <path d="M434 940V912" stroke="#0a2fb0" stroke-width="3"/><path d="M434 904l4 11h-8z" fill="#0a2fb0"/><path d="M436 941l34 1" stroke="#d8282c" stroke-width="3"/><path d="M467 938l12 4-12 3z" fill="#d8282c"/><circle cx="435" cy="941" r="4" fill="#bbb" stroke="#888" stroke-width=".5"/>
        <text x="429" y="906" fill="#1e50e0" font-size="13">Z</text><text x="479" y="948" fill="#d8282c" font-size="14">X</text>
      </g>
    </svg>
    <form class="distance">
      <i class="grip"></i>
      <label for="dist">거리</label>
      <div class="field"><input id="dist" value="30" autofocus onfocus="this.select()"><span class="unit">mm</span><button type="button" aria-label="단위 목록"><i class="caret big-caret"></i></button></div>
    </form>
  </section>

  <section class="dialog" role="dialog" aria-labelledby="dlg-title">
    <header><svg width="16" height="16"><use href="#gear"/></svg><h2 id="dlg-title">MCS 밀링</h2><button aria-label="닫기"><svg width="12" height="12" viewBox="0 0 12 12"><path d="M1 1l10 10M11 1L1 11" stroke="#fff" stroke-width="2"/></svg></button></header>
    <div class="blocks">
      <section class="block">
        <button class="head">기계 좌표계<svg width="16" height="14"><use href="#up"/></svg></button>
        <div class="row tall"><svg width="14" height="14"><use href="#tick"/></svg><span class="name">MCS 지정</span>
          <button class="sq" aria-label="좌표계 다이얼로그"><svg viewBox="0 0 20 20" width="20" height="20"><path d="M10 10V3" stroke="#1a3ab8" stroke-width="1.500"/><path d="M8 4l2-3 2 3z" fill="#1a3ab8"/><path d="M10 10l6-4" stroke="#2a9a3a" stroke-width="1.800"/><path d="M10 10l6 3" stroke="#d22" stroke-width="2"/><use href="#hook" x="1" y="4" width="17" height="15"/></svg></button>
          <button class="combo" aria-label="좌표계 유형"><svg viewBox="0 0 20 20" width="20" height="20"><path d="M2 3h11v9M8 13h9M10 15h5M12 17h1" fill="none" stroke="#c01cc0" stroke-width="1.400"/></svg><i class="caret"></i></button>
        </div>
        <div class="panel">
          <button class="head small">상세정보<svg width="13" height="12"><use href="#up"/></svg></button>
          <div class="row"><label for="purpose">목적</label><span class="select w152"><select id="purpose"><option>로컬</option></select></span></div>
          <div class="row"><label for="special">특수 출력</label><span class="select w152"><select id="special"><option>없음</option></select></span></div>
          <div class="row short"><label for="offset">치공구 옵셋</label><input id="offset" class="num" value="0"></div>
          <div class="row tall"><label for="savemcs">MCS 저장</label><button class="save" id="savemcs" aria-label="MCS 저장"><svg viewBox="0 0 20 20" width="20" height="20"><path d="M1 1h18v18H1z" fill="url(#blueg)"/><path d="M4 1h12v9H4z" fill="#f4f6ff"/><path d="M5 12h10v7H5z" fill="#16204a"/><path d="M11 13h3v5h-3z" fill="#4a6af0"/></svg></button></div>
        </div>
      </section>
      <section class="block"><button class="head">참조 좌표계<svg width="16" height="14"><use href="#down"/></svg></button></section>
      <section class="block gapblock">
        <button class="head">간격<svg width="16" height="14"><use href="#up"/></svg></button>
        <div class="row spaced"><label for="clear">간격 옵션</label><span class="select w152"><select id="clear"><option>평면</option></select></span></div>
        <div class="row tall"><div class="hot"><svg width="14" height="14"><use href="#tick"/></svg><span>평면 지정</span></div>
          <button class="sq" aria-label="평면 다이얼로그"><svg viewBox="0 0 20 20" width="20" height="20"><path d="M6 3l9 2v9l-9-3z" fill="#eef6f4" stroke="#333" stroke-width="1.300"/><use href="#hook" x="1" y="4" width="17" height="15"/></svg></button>
          <button class="combo warm" aria-label="평면 유형"><svg viewBox="0 0 24 24" width="24" height="24"><path d="M2 2l16 3v17L2 18z" fill="#e6f2ea" stroke="#444" stroke-width="1.500"/><path d="M9 19L19 9" stroke="#333"/><path d="M21 1l-8 8h4l-4 6 9-8h-4l5-6z" fill="#ffe030" stroke="#886a10" stroke-width=".8"/></svg><i class="caret"></i></button>
        </div>
      </section>
      <section class="block"><button class="head">하한 평면<svg width="16" height="14"><use href="#down"/></svg></button></section>
      <section class="block"><button class="head">회피<svg width="16" height="14"><use href="#down"/></svg></button></section>
      <section class="block"><button class="head">설명<svg width="16" height="14"><use href="#down"/></svg></button></section>
      <section class="block"><button class="head">레이아웃 및 레이어<svg width="16" height="14"><use href="#down"/></svg></button></section>
    </div>
    <button class="lesser" aria-label="접기"><i></i></button>
    <footer><button class="ok">확인</button><button class="cancel">취소</button></footer>
  </section>
</main>

<footer class="status">평면을 정의할 개체 선택</footer>
</body>
</html>
```
FILE: styles.css
```css
* { box-sizing: border-box; }
html, body { height: 100%; }
body {
  margin: 0;
  display: flex;
  flex-direction: column;
  overflow: hidden;
  background: #fff;
  color: #1a1a1a;
  font: 16px/20px "Noto Sans CJK KR", "Open Sans", sans-serif;
}
button, input, select { font: inherit; color: inherit; margin: 0; }
button { padding: 0; border: 0; background: none; }
h1, h2 { margin: 0; font-weight: 400; }
svg { display: block; flex: none; }
.defs { position: absolute; }

.caret {
  display: inline-block;
  width: 0;
  height: 0;
  border: 3px solid transparent;
  border-top-color: #1a1a1a;
  border-bottom: 0;
}
.big-caret { border-width: 4px; border-bottom: 0; }
.lined { position: relative; }
.lined::before { content: ""; position: absolute; left: -3px; top: -6px; width: 6px; height: 1px; background: #1a1a1a; }
.sep { flex: none; width: 1px; background: #d8d8d8; }

/* title bar */
.titlebar { flex: none; display: flex; align-items: center; height: 30px; padding-right: 204px; }
.titlebar .sep { height: 22px; margin: 0 3px; }
.logo { width: 43px; padding-left: 4px; color: #8599ab; font: bold 25px/30px "Liberation Sans", sans-serif; }
.qa { width: 23px; }
.qa svg { width: 22px; height: 22px; }
.drop { width: 12px; display: flex; align-items: center; justify-content: center; }
.qa-text { display: flex; align-items: center; gap: 1px; }
.qa-text .caret { margin-left: 3px; }
.titlebar h1 { margin-left: auto; font-size: 16px; color: #000; white-space: nowrap; }

/* ribbon tabs */
.tabs { flex: none; display: flex; gap: 1px; height: 31px; background: #c8d7d6; font-size: 17px; }
.tabs button { padding: 0 13px; white-space: nowrap; }
.tabs .file { width: 90px; background: #5c8780; color: #fff; font-size: 16px; }
.tabs .on { width: 42px; border-top: 1px solid #8d9c9f; background: #fff; color: #2a86bb; }

/* ribbon */
.ribbon { flex: none; display: flex; height: 103px; padding: 2px 0 1px; border-bottom: 1px solid #ddd; font-size: 15px; line-height: 19px; }
.group { flex: none; display: flex; flex-direction: column; justify-content: space-between; border-right: 1px solid #ddd; }
.tools { display: flex; }
.g-insert { width: 239px; padding-left: 3px; }
.g-action { width: 55px; }
.g-oper { width: 449px; padding-left: 7px; }
.g-display { width: 88px; }
.g-work { width: 121px; padding-left: 9px; }
.g-analysis { width: 60px; }
.g-geo { width: 134px; }
.g-sync { width: 218px; padding-left: 6px; }
.big { flex: none; display: flex; flex-direction: column; align-items: center; white-space: nowrap; }
.big > svg { width: 32px; height: 32px; margin: 3px 0; }
.big .caret { vertical-align: middle; margin: 0 1px 0 3px; }
.ribbon button:disabled { color: #c4c4c4; }
.w52 { width: 52px; } .w56 { width: 56px; } .w60 { width: 60px; } .w62 { width: 62px; } .w68 { width: 68px; }
.w70 { width: 70px; } .w80 { width: 80px; } .w90 { width: 90px; } .w106 { width: 106px; }
.more > svg { width: 38px; height: 34px; margin: 2px 0; border: 1px solid #e8e8e8; border-radius: 3px; }
.stack { display: flex; flex-direction: column; gap: 9px; padding-top: 4px; }
.stack svg { width: 16px; height: 16px; }
.pairs { display: grid; grid-template-columns: 37px 37px; grid-auto-rows: 25px; padding-left: 12px; }
.pairs button { display: flex; align-items: center; gap: 6px; }
.pairs svg { width: 17px; height: 17px; }
.cones { display: grid; grid-template-columns: 25px 25px; grid-auto-rows: 25px; }
.cones svg { width: 20px; height: 18px; }
.rows { display: flex; flex-direction: column; width: 90px; }
.rows button { display: flex; align-items: center; gap: 4px; height: 25px; white-space: nowrap; }
.rows svg { width: 17px; height: 17px; }
.g-sync .rows + .more { margin-left: auto; }
.caption { display: flex; align-items: center; color: #2a86bb; white-space: nowrap; }
.caption span { flex: 1; text-align: center; }
.caption .caret { margin: 2px 8px 0 0; }
.g-insert .caption span, .g-geo .caption span, .g-sync .caption span { padding-right: 8px; }
.g-oper .caption span, .g-work .caption span { padding-right: 14px; }
.g-analysis .caption span, .g-action .caption span { text-align: left; padding-left: 4px; }
.g-display .caption span { text-align: left; padding-left: 2px; }

/* selection bar */
.selbar { flex: none; display: flex; align-items: center; height: 35px; padding-left: 8px; border-bottom: 1px solid #868e93; font-size: 15px; }
.selbar .sep { height: 26px; }
.menu { display: flex; align-items: center; gap: 3px; width: 86px; white-space: nowrap; }
.faded { display: flex; gap: 1px; margin: 0 7px; }
.faded button, .icons button { width: 24px; height: 24px; display: flex; align-items: center; justify-content: center; }
.faded svg, .icons svg { width: 20px; height: 20px; }
.icons { display: flex; align-items: center; gap: 1px; padding-left: 6px; }
.icons .drop { width: 10px; }
.icons .on { background: #c8d9d7; border: 1px solid #a0b8b4; }
.icons .sep { margin: 0 6px 0 4px; }
.select { position: relative; display: block; }
.select select { display: block; width: 100%; height: 100%; padding: 0 20px 0 4px; border: 1px solid #a8a8a8; border-radius: 0; background: #fff; appearance: none; }
.select::after { content: ""; position: absolute; right: 7px; top: 50%; margin-top: -2px; border: 4px solid transparent; border-top-color: #1a1a1a; border-bottom: 0; pointer-events: none; }
.filter { width: 152px; height: 24px; margin-left: 12px; }
.scope { width: 160px; height: 24px; margin-left: 8px; }
.selbar select { padding-left: 2px; font-size: 15px; }

/* work area */
.work { flex: 1; min-height: 0; display: flex; position: relative; border-bottom: 1px solid #999; }
.rail { flex: none; width: 32px; background: #dcdcdc; border-right: 1px solid #a4a4a4; display: flex; flex-direction: column; }
.rail button { flex: none; height: 42px; padding-left: 5px; display: flex; align-items: center; }
.rail button > svg { width: 24px; height: 24px; }
.rail .gearbtn { height: 26px; margin-bottom: 16px; padding-left: 7px; }
.rail .gearbtn > svg { width: 16px; height: 16px; }
.rail .on { margin: 0 -1px 0 2px; padding-left: 3px; background: #fff; border: 1px solid #a4a4a4; border-right: 0; }
.rail .gap { margin: 12px 0 0; }

.navigator { flex: none; width: 339px; padding: 0 9px 6px 6px; border-right: 1px solid #868e93; display: flex; flex-direction: column; }
.navtitle { flex: none; height: 32px; display: flex; align-items: center; justify-content: space-between; padding: 0 7px 0 4px; }
.navtitle h2 { font-size: 16px; white-space: nowrap; }
.pin { width: 14px; height: 12px; border: 1px solid #222; border-top-width: 2px; margin-top: 4px; }
.treebox { flex: 1; min-height: 0; display: flex; flex-direction: column; border: 1px solid #ddd; border-left-width: 2px; }
.treeclip { flex: 1; min-height: 0; overflow: hidden; }
table { width: 100%; border-collapse: separate; border-spacing: 0; table-layout: fixed; }
th { height: 24px; padding: 0 7px; background: #f0f0f0; border-bottom: 1px solid #ccc; text-align: left; font-size: 16px; font-weight: 400; }
th:first-child { width: 199px; }
th + th { border-left: 1px solid #ccc; }
td { height: 24px; padding: 0; border-bottom: 1px solid #e6e6e6; }
td + td { border-left: 1px solid #000; }
tr:nth-child(even) td { background: #fafafa; }
.node { display: flex; align-items: center; height: 23px; font-size: 15px; line-height: 23px; white-space: nowrap; }
.folder { font-size: 16px; }
.node span { flex: 1; padding-left: 3px; }
.picked .node span, .picked td + td { background: #3399ff; color: #fff; }
.hscroll { flex: none; display: flex; height: 21px; padding-top: 1px; background: #f0f0f0; }
.hscroll button { width: 21px; display: flex; align-items: center; justify-content: center; }
.track { flex: 1; }
.thumb { width: 49%; height: 19px; background: #cdcdcd; }
.splitter { flex: none; height: 5px; border: 1px solid #b0b0b0; background: #ddd; }
.fold { flex: none; display: flex; align-items: center; justify-content: space-between; height: 28px; padding: 1px 6px 0 7px; border-bottom: 2px solid #d4d4d4; color: #2a86bb; font-size: 19px; }

.view { flex: 1; min-width: 0; position: relative; background: linear-gradient(#b2b4b6, #cfd0d2 30%, #e3e5e8 72%, #e8eaec); }
.scene { position: absolute; width: 100%; height: 100%; }
.distance { position: absolute; left: 340px; top: 190px; width: 180px; height: 35px; display: flex; align-items: center; background: #f0f6f6; border: 1px solid #aab4bc; font-size: 15px; }
.grip { width: 8px; height: 30px; margin: 0 9px 0 2px; background: radial-gradient(circle, #999 1px, transparent 2px) 0 0 / 4px 4px; }
.field { flex: 1; min-width: 0; display: flex; align-items: center; height: 28px; margin: 0 3px 0 4px; border: 1px solid #a8a8a8; background: #fff; }
.field input { flex: 1; min-width: 0; padding: 0 4px; border: 0; outline: 0; background: #fff; }
.field input::selection { background: #0078d7; color: #fff; }
.unit { width: 38px; height: 24px; padding: 1px 4px; border: 1px solid #aaa; }
.field button { width: 22px; }
.field .caret { display: block; margin: 0 auto; }

/* dialog */
.dialog { position: absolute; left: 335px; top: 21px; width: 369px; background: #e8e8e8; border: 1px solid #b4b4b4; border-top: 0; font-size: 16px; }
.dialog > header { display: flex; align-items: center; gap: 10px; height: 27px; margin: 0 -1px; padding: 0 11px 0 9px; background: #5e8882; color: #fff; }
.dialog h2 { flex: 1; font-size: 17px; }
.blocks { display: flex; flex-direction: column; gap: 3px; padding: 4px 5px 0; }
.block { background: #fff; border-bottom: 1px solid #c4c4c4; padding-bottom: 1px; }
.head { display: flex; align-items: center; justify-content: space-between; width: 100%; height: 26px; padding: 0 6px 0 8px; color: #2a86bb; font-size: 19px; }
.row { display: flex; align-items: center; height: 30px; margin: 0 9px; }
.row label { flex: 1; }
.row.tall { height: 32px; }
.row .name { flex: 1; padding-left: 4px; }
.block > .tall { margin-top: 8px; gap: 2px; }
.block > .tall svg:first-child { margin-left: 1px; }
.block > .tall .sq svg, .block > .tall .combo svg { margin: 0; }
.sq { width: 24px; height: 24px; border: 1px solid #a8a8a8; background: #fff; }
.combo { display: flex; align-items: center; justify-content: space-between; width: 53px; height: 32px; padding: 0 7px 0 5px; border: 1px solid #a8a8a8; background: #fff; }
.warm { background: linear-gradient(#f9d66c, #f9d66c) 31px 0 / 1px 100% no-repeat #fbeaae; border-color: #f9d66c; padding-left: 4px; }
.warm .caret { border-top-color: #2a86bb; }
.panel { margin: 2px 9px 8px; padding-bottom: 7px; background: #f0f6f6; border: 1px solid #d6dcdc; }
.head.small { height: 25px; margin-bottom: 6px; font-size: 16px; }
.panel .row { margin: 0 8px; }
.panel .row.short { height: 29px; }
.w152 { width: 152px; height: 28px; }
.num { width: 90px; height: 26px; padding: 0 6px; border: 1px solid #a8a8a8; border-radius: 0; text-align: right; }
.save { width: 32px; height: 32px; display: flex; align-items: center; justify-content: center; border: 1px solid #a8a8a8; background: #fff; }
.spaced { margin-top: 7px; }
.block .spaced + .tall { margin-top: 1px; }
.gapblock { padding-bottom: 8px; }
.hot { flex: 1; height: 32px; display: flex; align-items: center; gap: 5px; background: #fdd66e; }
.lesser { display: flex; align-items: center; justify-content: center; height: 17px; width: 357px; margin: 0 5px; border-bottom: 1px solid #ccc; }
.lesser i { border: 5px solid transparent; border-bottom-color: #1a1a1a; border-top: 0; }
.dialog > footer { display: flex; justify-content: flex-end; gap: 5px; padding: 8px 15px 10px; }
.dialog > footer button { width: 60px; height: 28px; border: 1px solid #a8a8a8; background: #cacace; }
.dialog > footer .ok { border-color: #4a9fd0; background: #9ccce6; }

/* status line */
.status { flex: none; height: 11px; padding-left: 3px; overflow: hidden; font-size: 15px; line-height: 22px; font-weight: 700; }
```
